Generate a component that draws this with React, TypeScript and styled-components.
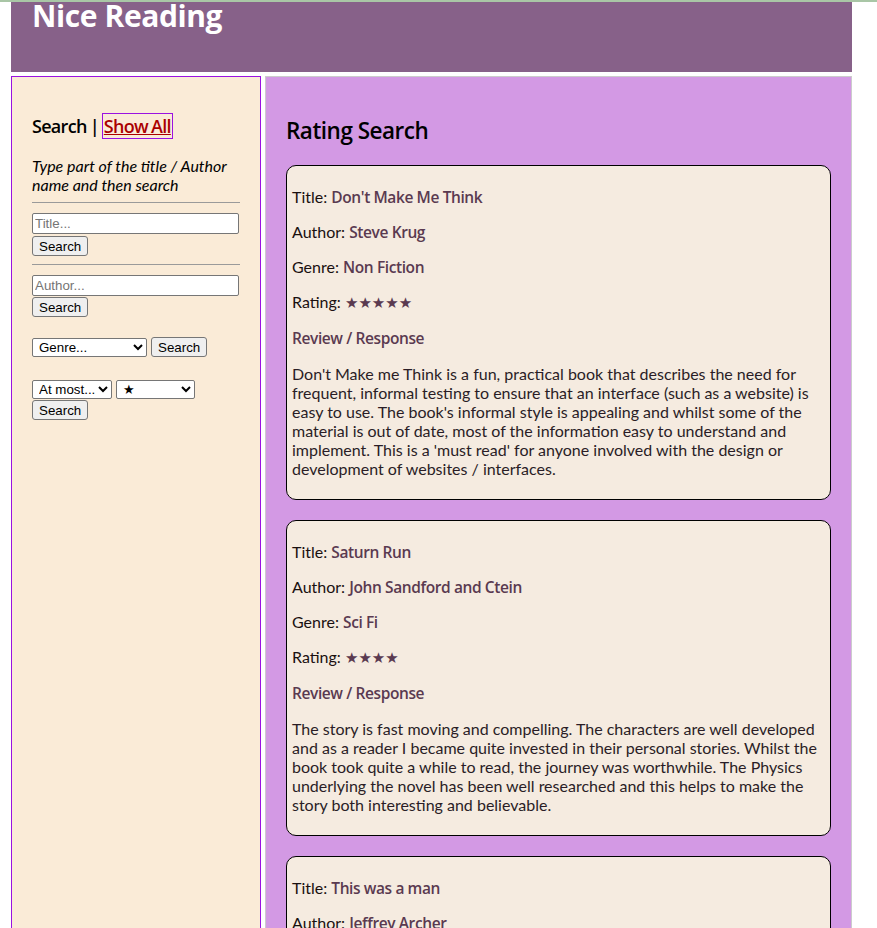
import React from 'react';
import styled, { createGlobalStyle } from 'styled-components';

const headingFont = '"Open Sans", "Noto Sans", sans-serif';
const bodyFont = 'Lato, "Liberation Sans", sans-serif';
const controlFont = '"Liberation Sans", Arial, sans-serif';

const colours = {
  topLine: '#a9c6a6',
  header: '#876189',
  sidebar: '#faebd7',
  sidebarBorder: '#9a12e0',
  main: '#d399e4',
  mainBorder: '#cccccc',
  card: '#f5ebe0',
  value: '#5a3a50',
  link: '#aa0000',
};

const books = [
  {
    title: "Don't Make Me Think",
    author: 'Steve Krug',
    genre: 'Non Fiction',
    rating: 5,
    review:
      "Don't Make me Think is a fun, practical book that describes the need for frequent, informal testing to ensure that an interface (such as a website) is easy to use. The book's informal style is appealing and whilst some of the material is out of date, most of the information easy to understand and implement. This is a 'must read' for anyone involved with the design or development of websites / interfaces.",
  },
  {
    title: 'Saturn Run',
    author: 'John Sandford and Ctein',
    genre: 'Sci Fi',
    rating: 4,
    review:
      'The story is fast moving and compelling. The characters are well developed and as a reader I became quite invested in their personal stories. Whilst the book took quite a while to read, the journey was worthwhile. The Physics underlying the novel has been well researched and this helps to make the story both interesting and believable.',
  },
  {
    title: 'This was a man',
    author: 'Jeffrey Archer',
    genre: 'Fiction',
    rating: 4,
    review:
      'The final part of the Clifton Chronicles brings the saga of Harry and Emma to a close, tying up the loose ends of a family story told over many years.',
  },
];

const GlobalStyle = createGlobalStyle`
  html, body {
    margin: 0;
    padding: 0;
    background: #ffffff;
  }
  body {
    border-top: 2px solid ${colours.topLine};
    font-family: ${bodyFont};
    font-size: 16px;
    color: #000;
  }
`;

const Page = styled.div`
  width: 841px;
  padding-left: 11px;
`;

const Header = styled.header`
  height: 70px;
  background: ${colours.header};
  overflow: hidden;
`;

const SiteTitle = styled.h1`
  margin: -6px 0 0 21px;
  font-family: ${headingFont};
  font-size: 30px;
  font-weight: 700;
  line-height: 40px;
  color: #ffffff;
  letter-spacing: -0.4px;
`;

const Columns = styled.div`
  display: flex;
  gap: 4px;
  margin-top: 4px;
  min-height: 860px;
`;

const Sidebar = styled.aside`
  flex: 0 0 250px;
  box-sizing: border-box;
  padding: 20px 20px 0 20px;
  background: ${colours.sidebar};
  border: 1px solid ${colours.sidebarBorder};
`;

const SideHeading = styled.h3`
  margin: 18px 0;
  font-family: ${headingFont};
  font-size: 18px;
  font-weight: 600;
  line-height: 23px;
  letter-spacing: -0.7px;
  word-spacing: -1px;
`;

const ShowAll = styled.a`
  color: ${colours.link};
  text-decoration: underline;
  border: 1px solid ${colours.sidebarBorder};
  padding: 0 1px;
`;

const Hint = styled.p`
  margin: 18px 0 0;
  font-style: italic;
  font-weight: 400;
  line-height: 19px;
`;

const Rule = styled.hr`
  margin: 8px 0;
  border: none;
  border-top: 1px solid #9a9a9a;
  height: 0;
`;

const SearchGroup = styled.div<{ $gap?: number; $inner?: number }>`
  display: flex;
  flex-direction: column;
  align-items: flex-start;
  gap: ${(p) => p.$inner ?? 2}px;
  margin-top: ${(p) => p.$gap ?? 0}px;
`;

const Row = styled.div`
  display: flex;
  align-items: center;
  gap: 4px;
`;

const TextInput = styled.input`
  box-sizing: border-box;
  width: 207px;
  height: 21px;
  margin: 2px 0 0;
  padding: 1px 2px;
  font-family: ${controlFont};
  font-size: 13.33px;
  background: #fff;
  border: 1px solid #767676;
  border-radius: 2px;
  &::placeholder {
    color: #757575;
  }
`;

const Button = styled.button`
  box-sizing: border-box;
  height: 20px;
  margin: 0;
  padding: 1px 6px;
  font-family: ${controlFont};
  font-size: 13.33px;
  color: #000;
  background: #efefef;
  border: 1px solid #767676;
  border-radius: 3px;
`;

const Select = styled.select<{ $width: number }>`
  box-sizing: border-box;
  width: ${(p) => p.$width}px;
  height: 19px;
  margin: 0;
  padding: 0 0 0 2px;
  font-family: ${controlFont};
  font-size: 13.33px;
  color: #000;
  background: #fff;
  border: 1px solid #767676;
  border-radius: 2px;
`;

const Main = styled.main`
  flex: 1 1 auto;
  box-sizing: border-box;
  padding: 20px 20px 0 20px;
  background: ${colours.main};
  border: 1px solid ${colours.mainBorder};
`;

const MainHeading = styled.h2`
  margin: 20px 0;
  font-family: ${headingFont};
  font-size: 22.5px;
  font-weight: 600;
  line-height: 28px;
  letter-spacing: -0.5px;
`;

const CardList = styled.div`
  display: flex;
  flex-direction: column;
  gap: 20px;
`;

const Card = styled.article`
  padding: 5px;
  background: ${colours.card};
  border: 1px solid #000;
  border-radius: 10px;
`;

const Field = styled.p`
  margin: 16px 0;
  line-height: 19px;
  color: #1a1010;
`;

const Value = styled.span`
  font-family: ${headingFont};
  font-size: 15.5px;
  font-weight: 600;
  line-height: 1;
  color: ${colours.value};
  letter-spacing: -0.4px;
`;

const Stars = styled.span`
  font-family: "DejaVu Sans", sans-serif;
  font-size: 15px;
  line-height: 1;
  color: ${colours.value};
`;

const ReviewHeading = styled.h4`
  margin: 18px 0 16px;
  font-family: ${headingFont};
  font-size: 15.5px;
  font-weight: 600;
  line-height: 19px;
  color: ${colours.value};
  letter-spacing: -0.4px;
`;

const Review = styled.p`
  margin: 16px 0;
  line-height: 19px;
  color: #2a1d26;
`;

const BookCard: React.FC<{ book: (typeof books)[number] }> = ({ book }) => (
  <Card>
    <Field>
      Title: <Value>{book.title}</Value>
    </Field>
    <Field>
      Author: <Value>{book.author}</Value>
    </Field>
    <Field>
      Genre: <Value>{book.genre}</Value>
    </Field>
    <Field>
      Rating: <Stars>{'★'.repeat(book.rating)}</Stars>
    </Field>
    <ReviewHeading>Review / Response</ReviewHeading>
    <Review>{book.review}</Review>
  </Card>
);

export default function App() {
  return (
    <>
      <GlobalStyle />
      <Page>
        <Header>
          <SiteTitle>Nice Reading</SiteTitle>
        </Header>
        <Columns>
          <Sidebar>
            <SideHeading>
              Search | <ShowAll href="#">Show All</ShowAll>
            </SideHeading>
            <Hint>Type part of the title / Author name and then search</Hint>
            <Rule />
            <SearchGroup>
              <TextInput placeholder="Title..." />
              <Button>Search</Button>
            </SearchGroup>
            <Rule />
            <SearchGroup $gap={1} $inner={1}>
              <TextInput placeholder="Author..." />
              <Button>Search</Button>
            </SearchGroup>
            <SearchGroup $gap={20}>
              <Row>
                <Select $width={115} defaultValue="">
                  <option value="">Genre...</option>
                  <option>Fiction</option>
                  <option>Non Fiction</option>
                  <option>Sci Fi</option>
                </Select>
                <Button>Search</Button>
              </Row>
            </SearchGroup>
            <SearchGroup $gap={23} $inner={1}>
              <Row>
                <Select $width={80} defaultValue="most">
                  <option value="most">At most...</option>
                  <option>At least...</option>
                </Select>
                <Select $width={79} defaultValue="1">
                  <option value="1">★</option>
                  <option value="2">★★</option>
                  <option value="3">★★★</option>
                  <option value="4">★★★★</option>
                  <option value="5">★★★★★</option>
                </Select>
              </Row>
              <Button>Search</Button>
            </SearchGroup>
          </Sidebar>
          <Main>
            <MainHeading>Rating Search</MainHeading>
            <CardList>
              {books.map((book) => (
                <BookCard key={book.title} book={book} />
              ))}
            </CardList>
          </Main>
        </Columns>
      </Page>
    </>
  );
}
